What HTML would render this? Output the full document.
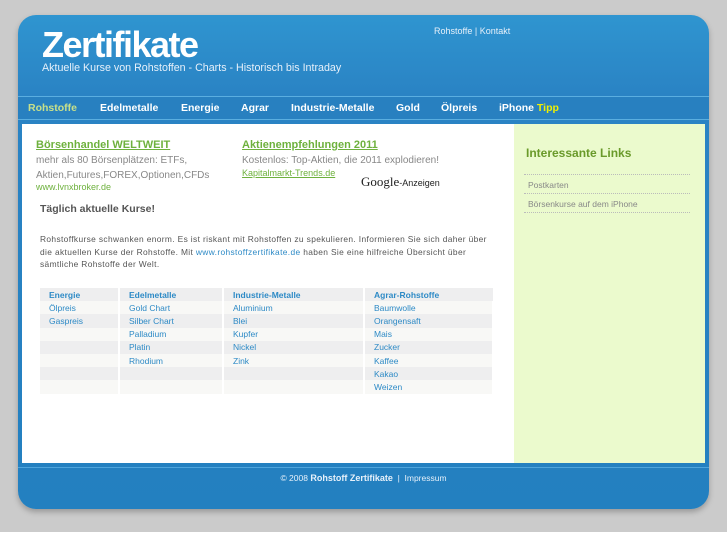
<!DOCTYPE html>
<html><head><meta charset="utf-8"><style>
*{margin:0;padding:0;box-sizing:border-box}
body{width:727px;height:545px;background:#fff;font-family:"Liberation Sans",sans-serif;position:relative;overflow:hidden}
#bg{position:absolute;left:0;top:0;width:727px;height:532px;background:#cbcbcb}
#box{position:absolute;left:18px;top:15px;width:691px;height:494px;border-radius:18px;background:linear-gradient(#2f95d0,#2a83c4 80px,#2380c0);box-shadow:0 3px 6px rgba(0,0,0,.25)}
.a{position:absolute}
#logo{left:24px;top:9px;color:#fff;font-size:36px;font-weight:bold;letter-spacing:-1.5px}
#sub{left:24px;top:47px;color:#e6f0fa;font-size:10.7px}
#top{left:416px;top:11px;color:#e6f0fa;font-size:9px}
#nav{left:0;top:81px;width:691px;height:24px;border-top:1px solid #5aaee0;border-bottom:1px solid #5aaee0;background:#2880c0}
#nav span{position:absolute;top:5px;color:#fff;font-size:10.5px;font-weight:bold}
#main{left:4px;top:109px;width:492px;height:339px;background:#fff}
#side{left:496px;top:109px;width:191px;height:339px;background:#ebfacd}
#foot{left:0;top:452px;width:691px;border-top:1px solid #4fa5dc;text-align:center;color:#e6f0fa;font-size:8.5px;padding-top:5px}
.g{color:#6eb13d;font-weight:bold;font-size:11px;text-decoration:underline}
.t{color:#888;font-size:10px;line-height:15px}
table{position:absolute;left:18px;top:164px;width:454px;border-collapse:collapse;font-size:8.5px;color:#2d8ac6}
td{height:13.2px;padding-left:9px;border-right:2px solid #fff}
tr:nth-child(odd) td{background:#eeeeef}
tr:nth-child(even) td{background:#f8f8f6}
tr:first-child td{font-weight:bold}
.sl{position:absolute;left:10px;width:166px;border-top:1px dotted #bbb;color:#888;font-size:8.5px;padding:5px 0 0 4px;height:19px}
</style></head><body>
<div id="bg"></div>
<div id="box">
<div class="a" id="logo">Zertifikate</div>
<div class="a" id="sub">Aktuelle Kurse von Rohstoffen - Charts - Historisch bis Intraday</div>
<div class="a" id="top">Rohstoffe | Kontakt</div>
<div class="a" id="nav">
<span style="left:10px;color:#c8e08a">Rohstoffe</span>
<span style="left:82px">Edelmetalle</span>
<span style="left:163px">Energie</span>
<span style="left:223px">Agrar</span>
<span style="left:273px">Industrie-Metalle</span>
<span style="left:378px">Gold</span>
<span style="left:423px">Ölpreis</span>
<span style="left:481px">iPhone <b style="color:#f0f000">Tipp</b></span>
</div>
<div class="a" id="main">
<div class="a g" style="left:14px;top:15px">Börsenhandel WELTWEIT</div>
<div class="a t" style="left:14px;top:29px">mehr als 80 Börsenplätzen: ETFs,<br>Aktien,Futures,FOREX,Optionen,CFDs</div>
<div class="a" style="left:14px;top:58px;height:8px;overflow:hidden;color:#6eb13d;font-size:9px">www.lynxbroker.de</div>
<div class="a g" style="left:220px;top:15px">Aktienempfehlungen 2011</div>
<div class="a t" style="left:220px;top:29px">Kostenlos: Top-Aktien, die 2011 explodieren!</div>
<div class="a" style="left:220px;top:44px;color:#6eb13d;font-size:9px;text-decoration:underline">Kapitalmarkt-Trends.de</div>
<div class="a" style="left:339px;top:50px;font-family:'Liberation Serif',serif;font-size:13px;color:#222">Google<span style="font-family:'Liberation Sans';font-size:9px">-Anzeigen</span></div>
<div class="a" style="left:18px;top:79px;color:#555;font-weight:bold;font-size:10.5px">Täglich aktuelle Kurse!</div>
<div class="a" style="left:18px;top:109px;white-space:nowrap;color:#555;font-size:8.4px;letter-spacing:0.36px;line-height:12.5px">Rohstoffkurse schwanken enorm. Es ist riskant mit Rohstoffen zu spekulieren. Informieren Sie sich daher über<br>die aktuellen Kurse der Rohstoffe. Mit <span style="color:#2d8ac6">www.rohstoffzertifikate.de</span> haben Sie eine hilfreiche Übersicht über<br>sämtliche Rohstoffe der Welt.</div>
<table>
<tr><td style="width:79px">Energie</td><td style="width:104px">Edelmetalle</td><td style="width:141px">Industrie-Metalle</td><td style="border:0">Agrar-Rohstoffe</td></tr>
<tr><td>Ölpreis</td><td>Gold Chart</td><td>Aluminium</td><td>Baumwolle</td></tr>
<tr><td>Gaspreis</td><td>Silber Chart</td><td>Blei</td><td>Orangensaft</td></tr>
<tr><td></td><td>Palladium</td><td>Kupfer</td><td>Mais</td></tr>
<tr><td></td><td>Platin</td><td>Nickel</td><td>Zucker</td></tr>
<tr><td></td><td>Rhodium</td><td>Zink</td><td>Kaffee</td></tr>
<tr><td></td><td></td><td></td><td>Kakao</td></tr>
<tr><td></td><td></td><td></td><td>Weizen</td></tr>
</table>
</div>
<div class="a" id="side">
<div class="a" style="left:12px;top:22px;color:#6a9a2a;font-weight:bold;font-size:12px">Interessante Links</div>
<div class="sl" style="top:50px">Postkarten</div>
<div class="sl" style="top:69px">Börsenkurse auf dem iPhone</div>
<div class="sl" style="top:88px;height:1px;padding:0"></div>
</div>
<div class="a" id="foot">© 2008 <b style="font-size:9px">Rohstoff Zertifikate</b> &nbsp;| &nbsp;Impressum</div>
</div>
</body></html>
